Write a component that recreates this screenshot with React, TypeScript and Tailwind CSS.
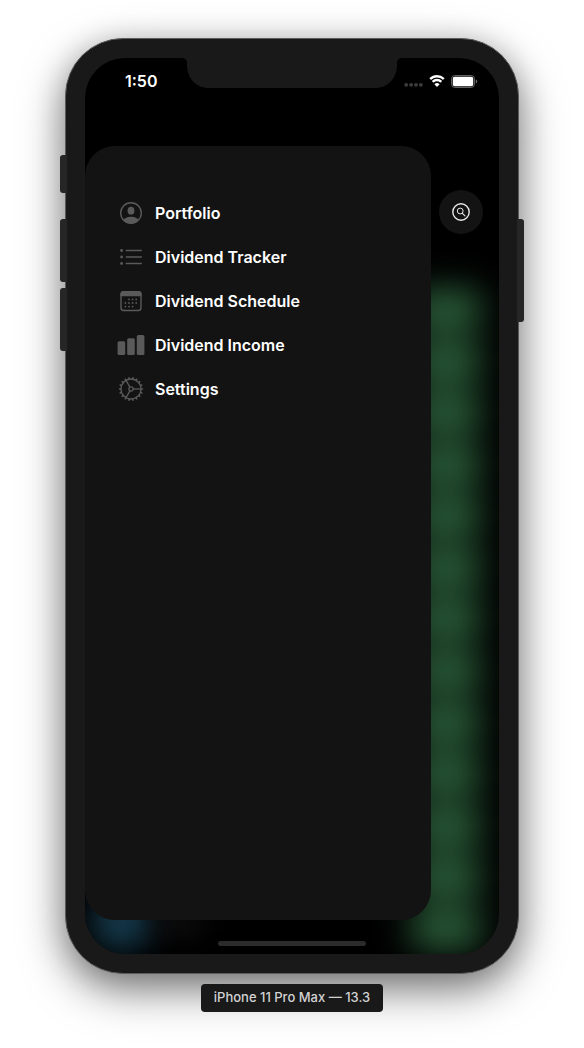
import type { ReactNode } from "react";

const PILLS = Array.from({ length: 13 }, (_, i) => i);
const TEETH = Array.from({ length: 18 }, (_, i) => i * 20);
const DOTS = [
  [12, 12.4], [15.6, 12.4], [19.2, 12.4],
  [8.4, 16], [12, 16], [15.6, 16], [19.2, 16],
  [8.4, 19.6], [12, 19.6], [15.6, 19.6],
];

function PersonIcon() {
  return (
    <svg viewBox="0 0 28 28" className="size-7" fill="none" aria-hidden="true">
      <defs>
        <clipPath id="person-ring">
          <circle cx="14" cy="14" r="10.5" />
        </clipPath>
      </defs>
      <circle cx="14" cy="14" r="10.3" stroke="currentColor" strokeWidth="1.4" />
      <ellipse cx="14" cy="11.7" rx="3.4" ry="3.9" fill="currentColor" />
      <ellipse cx="14" cy="22.6" rx="8" ry="4.8" fill="currentColor" clipPath="url(#person-ring)" />
    </svg>
  );
}

function ListIcon() {
  return (
    <svg viewBox="0 0 28 28" className="size-7" fill="currentColor" aria-hidden="true">
      {[7.5, 14, 20.5].map((y) => (
        <g key={y}>
          <circle cx="4.6" cy={y} r="1.4" />
          <rect x="8.6" y={y - 0.7} width="16.4" height="1.4" rx="0.7" />
        </g>
      ))}
    </svg>
  );
}

function CalendarIcon() {
  return (
    <svg viewBox="0 0 28 28" className="size-7" fill="none" aria-hidden="true">
      <rect x="4" y="4.7" width="20" height="18.8" rx="2.8" stroke="currentColor" strokeWidth="1.4" />
      <path d="M3.4 9.2V7A3 3 0 0 1 6.4 4h15.2a3 3 0 0 1 3 3v2.2z" fill="currentColor" />
      {DOTS.map(([x, y]) => (
        <circle key={`${x}-${y}`} cx={x} cy={y} r="0.9" fill="currentColor" />
      ))}
    </svg>
  );
}

function BarsIcon() {
  return (
    <svg viewBox="0 0 28 28" className="size-7" fill="currentColor" aria-hidden="true">
      <rect x="0.6" y="10.2" width="7.6" height="13.8" rx="1.6" />
      <rect x="10.2" y="7.2" width="7.6" height="16.8" rx="1.6" />
      <rect x="19.8" y="4" width="7.6" height="20" rx="1.6" />
    </svg>
  );
}

function GearIcon() {
  return (
    <svg viewBox="0 0 28 28" className="size-7" fill="none" stroke="currentColor" strokeWidth="1.3" aria-hidden="true">
      <circle cx="14" cy="14" r="10" />
      <circle cx="14" cy="14" r="2.1" />
      {TEETH.map((a) => (
        <path key={a} d="M24.4 14h1.1" strokeWidth="1.5" strokeLinecap="round" transform={`rotate(${a} 14 14)`} />
      ))}
      {[0, 120, 240].map((a) => (
        <path key={a} d="M16.1 14H24" transform={`rotate(${a} 14 14)`} />
      ))}
    </svg>
  );
}

const MENU: { label: string; icon: ReactNode }[] = [
  { label: "Portfolio", icon: <PersonIcon /> },
  { label: "Dividend Tracker", icon: <ListIcon /> },
  { label: "Dividend Schedule", icon: <CalendarIcon /> },
  { label: "Dividend Income", icon: <BarsIcon /> },
  { label: "Settings", icon: <GearIcon /> },
];

function StatusBar() {
  return (
    <div className="flex h-[22px] items-center justify-between pr-[21px] pl-10 text-white">
      <time className="text-base font-semibold">1:50</time>
      <div className="flex items-center gap-1.5">
        <svg viewBox="0 0 19 12" className="h-3 w-[19px] fill-[#3c3c3c]" aria-hidden="true">
          {[2.2, 7.1, 12, 16.9].map((x) => (
            <circle key={x} cx={x} cy="9.8" r="1.9" />
          ))}
        </svg>
        <svg viewBox="0 0 16 12" className="h-3 w-4" fill="white" aria-label="Wi-Fi" role="img">
          <path d="M8 2.5c2.2 0 4.2.85 5.7 2.25.12.1.3.1.4 0l1.3-1.3a.3.3 0 0 0 0-.43A10.6 10.6 0 0 0 8 0C5.2 0 2.5 1.15.6 3.02a.3.3 0 0 0 0 .43l1.3 1.3c.1.1.28.1.4 0A8.3 8.3 0 0 1 8 2.5z" />
          <path d="M8 6.35c1.2 0 2.35.45 3.23 1.25.12.1.3.1.42 0l1.3-1.32a.3.3 0 0 0 0-.44 7.15 7.15 0 0 0-9.9 0 .3.3 0 0 0 0 .44l1.3 1.32c.12.1.3.1.42 0A4.8 4.8 0 0 1 8 6.35z" />
          <path d="M10.4 8.7a.3.3 0 0 0 0-.44 3.65 3.65 0 0 0-4.8 0 .3.3 0 0 0 0 .44l2.15 2.15c.14.14.36.14.5 0z" transform="translate(0 .8)" />
        </svg>
        <svg viewBox="0 0 27 13" className="h-[13px] w-[27px]" fill="none" aria-label="Battery" role="img">
          <rect x="0.6" y="0.6" width="22.8" height="11.8" rx="3" stroke="#6c6c6c" strokeWidth="1" />
          <rect x="1.8" y="1.8" width="20.4" height="9.4" rx="1.8" fill="white" />
          <path d="M24.8 4.4v4.2c.9-.3 1.4-1.2 1.4-2.1s-.5-1.8-1.4-2.1z" fill="#6c6c6c" />
        </svg>
      </div>
    </div>
  );
}

function Backdrop() {
  return (
    <div className="absolute inset-0" aria-hidden="true">
      <div className="absolute top-[232px] right-[19px] bottom-[5px] flex w-[68px] flex-col justify-between blur-[17px]">
        {PILLS.map((p) => (
          <span key={p} className="h-[40px] rounded-md bg-[#2b603b]" />
        ))}
      </div>
      <div className="absolute bottom-[4px] left-[6px] h-14 w-[62px] rounded-full bg-[#15394b] blur-[15px]" />
      <div className="absolute bottom-[20px] left-[70px] h-5 w-12 bg-[#101010] blur-[12px]" />
    </div>
  );
}

function Notch() {
  return (
    <svg viewBox="0 0 220 30" className="absolute top-0 left-1/2 h-[30px] w-[220px] -translate-x-1/2 fill-[#191919]" aria-hidden="true">
      <path d="M0 0h220c-3 0-5 2-5 5v2c0 13-9 23-22 23H27C14 30 5 20 5 7V5c0-3-2-5-5-5z" />
    </svg>
  );
}

function Drawer() {
  return (
    <nav className="mr-[68px] flex-1 rounded-[30px] bg-[#131313] pt-[53px] pl-8">
      <ul className="flex flex-col gap-4">
        {MENU.map((item) => (
          <li key={item.label}>
            <a href="#" className="flex h-7 items-center gap-[10px] text-[#5a5a5a]">
              {item.icon}
              <span className="text-base font-semibold text-white">{item.label}</span>
            </a>
          </li>
        ))}
      </ul>
    </nav>
  );
}

export default function App() {
  return (
    <main className="flex min-h-screen flex-col items-center bg-white px-[65px] pt-[38px] pb-9 font-[Inter,sans-serif]">
      <div className="relative flex w-full flex-1 flex-col">
        <div className="flex flex-1 flex-col rounded-[58px] border border-[#5c5c5c] bg-[#191919] p-[19px] shadow-[0_16px_44px_rgba(0,0,0,0.5),0_4px_30px_rgba(0,0,0,0.15)]">
          <div className="relative flex flex-1 flex-col overflow-hidden rounded-[40px] bg-black">
            <Backdrop />
            <Notch />
            <div className="relative flex flex-1 flex-col pt-3">
              <StatusBar />
              <div className="flex flex-1 flex-col pt-[54px]">
                <Drawer />
              </div>
              <button
                type="button"
                aria-label="Search"
                className="absolute top-[132px] right-4 flex size-11 items-center justify-center rounded-full bg-[#131313] text-[#e8e8e8]"
              >
                <svg viewBox="0 0 20 20" className="size-5" fill="none" stroke="currentColor" aria-hidden="true">
                  <circle cx="10" cy="10" r="8.2" strokeWidth="1.4" />
                  <circle cx="9.2" cy="9" r="2.9" strokeWidth="1" />
                  <path d="m11.4 11.3 2.5 2.5" strokeWidth="1.1" strokeLinecap="round" />
                </svg>
              </button>
              <div className="flex h-[34px] items-end justify-center pb-2">
                <span className="h-[5px] w-[148px] rounded-full bg-[#2b2b2b]" />
              </div>
            </div>
          </div>
        </div>
        <span className="absolute top-[117px] -left-[5px] h-[38px] w-[7px] rounded-l-[3px] bg-[#262626]" />
        <span className="absolute top-[181px] -left-[5px] h-[63px] w-[7px] rounded-l-[3px] bg-[#262626]" />
        <span className="absolute top-[250px] -left-[5px] h-[63px] w-[7px] rounded-l-[3px] bg-[#262626]" />
        <span className="absolute top-[181px] -right-[5px] h-[103px] w-[7px] rounded-r-[3px] bg-[#262626]" />
      </div>
      <p className="relative mt-[10px] flex h-7 items-center rounded bg-[#191919] px-[13px] text-[13px] font-medium text-[#d2d2d2]">
        iPhone 11 Pro Max — 13.3
      </p>
    </main>
  );
}
